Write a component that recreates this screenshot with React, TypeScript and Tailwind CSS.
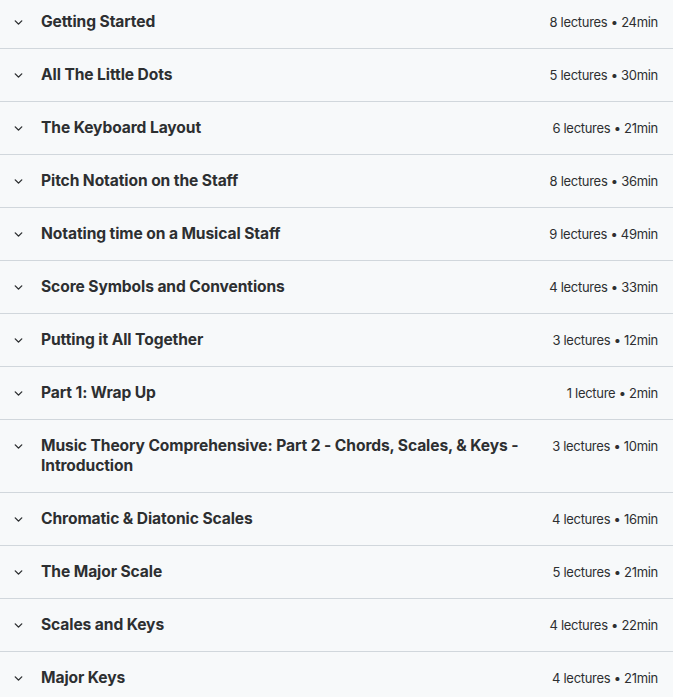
import { ChevronDown } from 'lucide-react'

const SECTIONS = [
  { title: 'Getting Started', meta: '8 lectures • 24min' },
  { title: 'All The Little Dots', meta: '5 lectures • 30min' },
  { title: 'The Keyboard Layout', meta: '6 lectures • 21min' },
  { title: 'Pitch Notation on the Staff', meta: '8 lectures • 36min' },
  { title: 'Notating time on a Musical Staff', meta: '9 lectures • 49min' },
  { title: 'Score Symbols and Conventions', meta: '4 lectures • 33min' },
  { title: 'Putting it All Together', meta: '3 lectures • 12min' },
  { title: 'Part 1: Wrap Up', meta: '1 lecture • 2min' },
  { title: 'Music Theory Comprehensive: Part 2 - Chords, Scales, & Keys - Introduction', meta: '3 lectures • 10min' },
  { title: 'Chromatic & Diatonic Scales', meta: '4 lectures • 16min' },
  { title: 'The Major Scale', meta: '5 lectures • 21min' },
  { title: 'Scales and Keys', meta: '4 lectures • 22min' },
  { title: 'Major Keys', meta: '4 lectures • 21min' },
]

export default function App() {
  return (
    <div className="min-h-screen bg-[#f7f9fa] overflow-hidden" style={{ fontFamily: 'Inter, "Noto Sans", sans-serif' }}>
      <div className="-mt-[4px]">
        {SECTIONS.map((s) => (
          <div key={s.title} className="flex items-start border-b border-[#d1d7dc] pl-[12px] pr-[15px] py-4 text-[#2d2f31]">
            <ChevronDown className="w-[13px] h-[13px] mt-[4px] shrink-0" strokeWidth={2.6} />
            <div className="flex-1 ml-[16px] pr-6 text-[15.6px] leading-5 font-bold tracking-[-0.1px]">{s.title}</div>
            <div className="shrink-0 text-[13px] leading-5 tracking-[-0.3px] text-[#2d2f31]">{s.meta}</div>
          </div>
        ))}
      </div>
    </div>
  )
}
